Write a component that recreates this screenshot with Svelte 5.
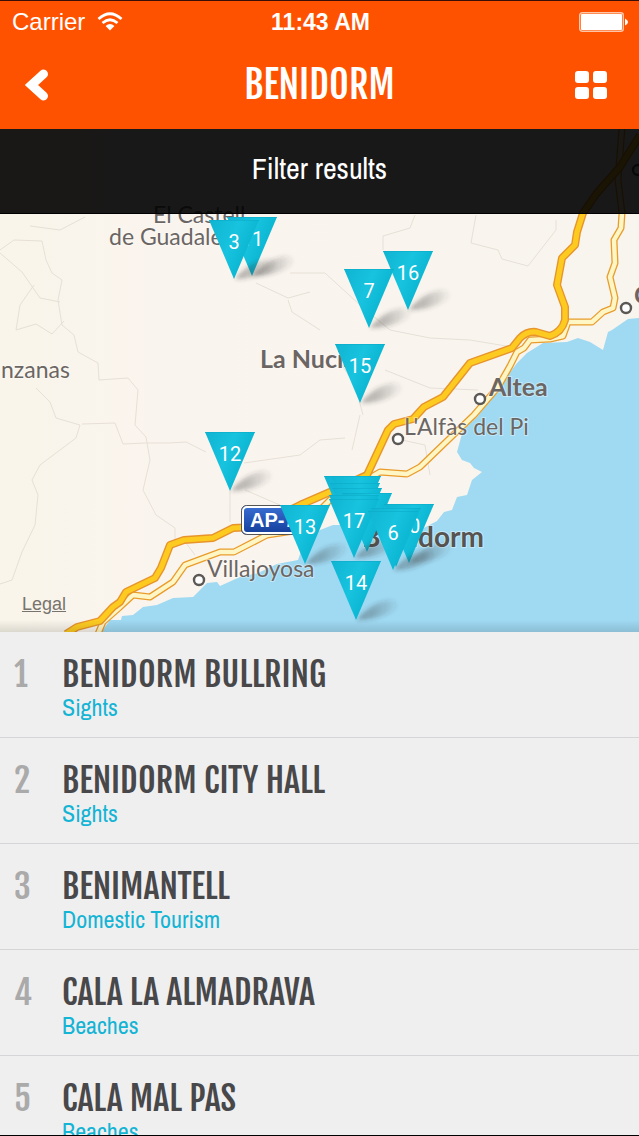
<script>
  const places = [
    { name: 'BENIDORM BULLRING', kind: 'Sights' },
    { name: 'BENIDORM CITY HALL', kind: 'Sights' },
    { name: 'BENIMANTELL', kind: 'Domestic Tourism' },
    { name: 'CALA LA ALMADRAVA', kind: 'Beaches' },
    { name: 'CALA MAL PAS', kind: 'Beaches' }
  ];

  // Pins in drawing order: x, y is the top left corner of the triangle.
  const pins = [
    { x: 227, y: 217, n: 11 },
    { x: 209, y: 220, n: 3 },
    { x: 383, y: 251, n: 16 },
    { x: 344, y: 269, n: 7 },
    { x: 335, y: 344, n: 15 },
    { x: 205, y: 432, n: 12 },
    { x: 324, y: 476 },
    { x: 331, y: 476 },
    { x: 330, y: 483 },
    { x: 332, y: 488 },
    { x: 342, y: 493 },
    { x: 329, y: 495 },
    { x: 280, y: 505, n: 13 },
    { x: 329, y: 499, n: 17 },
    { x: 384, y: 504, n: 10 },
    { x: 371, y: 508 },
    { x: 368, y: 511, n: 6 },
    { x: 331, y: 561, n: 14 }
  ];

  const towns = [
    { x: 199, y: 580 },
    { x: 398, y: 439 },
    { x: 480, y: 399 },
    { x: 626, y: 308 },
    { x: 638, y: 170 }
  ];

  const motorway =
    'M66 634 L77 627 L100 621 L113 607 L120 602 L126 592 L155 578 L161 568 L170 545 L184 540 L213 538 L233 528 L255 527 L300 505 L330 492 L367 475 L388 430 L394 424 L413 419 L424 407 L443 397 L470 363 L512 348 L520 338 Q527 331 536 332 L550 336 Q562 332 565 320 L565 307 L557 285 L562 258 L575 245 L577 232 L583 213 L597 193 L620 167 L640 135';
  const coastRoad =
    'M98 634 L103 622 L120 607 L133 595 L150 597 L173 582 L185 565 L220 552 L234 552 L267 535 L300 530 L330 500 L373 476 L380 472 L407 474 L420 467 L474 415 L498 387 L510 366 L517 352 L524 348 L530 340 L550 339 L563 336 L568 322 L592 322 L603 312 L613 308 L615 298 L610 277 L615 263 L614 240 L621 228 L622 213 L618 180 L622 128';
  const sea =
    'M640 318 L628 319 L612 330 L608 332 L603 350 L590 342 L578 338 L567 342 L543 343 L527 353 L517 363 L503 382 L493 397 L477 417 L463 430 L457 452 L462 460 L470 463 L474 468 L482 472 L472 480 L467 495 L457 497 L452 510 L444 512 L437 521 L418 531 L385 536 L350 525 L333 525 L320 530 L305 540 L298 560 L277 564 L258 573 L240 577 L220 586 L217 582 L207 583 L193 597 L173 598 L157 605 L143 607 L133 615 L122 616 L121 620 L110 620 L100 634 H640 Z';
</script>

<div class="page">
  <header>
    <div class="status">
      <span class="carrier">
        Carrier
        <svg width="26" height="20" viewBox="0 0 26 20" fill="none" aria-hidden="true">
          <path d="M1.5 7 Q13 -3.5 24.5 7" stroke="#fff" stroke-width="2.8" />
          <path d="M5.5 11 Q13 4.5 20.5 11" stroke="#fff" stroke-width="2.8" />
          <path d="M8.6 14 Q13 10 17.4 14 L13 18.6 Z" fill="#fff" />
        </svg>
      </span>
      <span class="time">11:43 AM</span>
      <svg class="battery" width="50" height="20" viewBox="0 0 50 20" aria-hidden="true">
        <rect x="0.7" y="0.7" width="43.6" height="18.6" rx="2.5" fill="none" stroke="#ffc5a8" stroke-width="1.4" />
        <rect x="2" y="2" width="41" height="16" rx="1" fill="#fff" />
        <path d="M46 6.5 Q49 8 49 10 Q49 12 46 13.5 Z" fill="#fff" />
      </svg>
    </div>
    <nav>
      <button aria-label="Back">
        <svg width="26" height="34" viewBox="0 0 26 34" aria-hidden="true">
          <path d="M19.5 6 L7.5 17 L19.5 28" fill="none" stroke="#fff" stroke-width="9" stroke-linecap="round" />
          <path d="M1.5 17 L10 9 V25 Z" fill="#fff" />
        </svg>
      </button>
      <h1>BENIDORM</h1>
      <button class="grid" aria-label="Grid view">
        <svg width="32" height="28" viewBox="0 0 32 28" fill="#fff" aria-hidden="true">
          <rect x="0" y="0" width="14" height="12" rx="3" />
          <rect x="18" y="0" width="14" height="12" rx="3" />
          <rect x="0" y="16" width="14" height="12" rx="3" />
          <rect x="18" y="16" width="14" height="12" rx="3" />
        </svg>
      </button>
    </nav>
  </header>

  <section class="map">
    <svg class="canvas" viewBox="0 129 639 503" role="img" aria-label="Map of Benidorm">
      <defs>
        <linearGradient id="land" x1="0" x2="1" y1="0" y2="0">
          <stop offset="0" stop-color="#f9f5ea" />
          <stop offset="0.25" stop-color="#faf4ee" />
          <stop offset="1" stop-color="#f8f5ee" />
        </linearGradient>
        <linearGradient id="pin" x1="0" x2="1" y1="0" y2="0.5">
          <stop offset="0" stop-color="#10b4d2" />
          <stop offset="0.5" stop-color="#17c3de" />
          <stop offset="1" stop-color="#05b0cd" />
        </linearGradient>
        <linearGradient id="shield" x1="0" x2="0" y1="0" y2="1">
          <stop offset="0" stop-color="#3d70d4" />
          <stop offset="0.5" stop-color="#2556b8" />
          <stop offset="1" stop-color="#143d98" />
        </linearGradient>
        <linearGradient id="edge" x1="0" x2="0" y1="0" y2="1">
          <stop offset="0" stop-color="#000" stop-opacity="0" />
          <stop offset="1" stop-color="#000" stop-opacity="0.12" />
        </linearGradient>
        <linearGradient id="fade" x1="0" x2="1" y1="0" y2="0">
          <stop offset="0" stop-color="#333" stop-opacity="0.4" />
          <stop offset="0.5" stop-color="#333" stop-opacity="0.25" />
          <stop offset="1" stop-color="#333" stop-opacity="0.03" />
        </linearGradient>
        <filter id="soft" x="-30%" y="-60%" width="160%" height="220%">
          <feGaussianBlur stdDeviation="2" />
        </filter>
      </defs>

      <rect y="129" width="639" height="503" fill="url(#land)" />
      <g class="tracks">
        <path d="M0 250 L14 240 L42 241 L46 260 L52 273 L62 280 L58 300 L62 325 L74 335 L78 352 L98 363 L99 380 L128 378 L138 390 L135 425 L146 437 L150 460 L143 490 L156 515 L175 528 V540" />
        <path d="M0 253 L22 272 L40 298 L60 302 M16 330 L20 305 L34 285 M16 330 L36 324 L52 334 L64 321" />
        <path d="M36 388 L50 402 L56 418 L80 425 L76 438 L40 465 L32 480 L38 495 L35 525 L22 552 L12 580 L0 584" />
        <path d="M82 424 L115 423 L123 444 L145 443 L168 443 L186 442 L206 452 M230 491 V522 M244 463 L300 455 L320 440 L345 438" />
        <path d="M30 226 L60 230 L85 217 M256 283 L288 298 L310 292 M288 300 L292 312 L320 330 M290 273 H325 L360 305 L390 330 L430 338 L470 340 L512 347" />
        <path d="M415 215 L410 228 L383 236 V250 M476 215 L471 243 L498 250 L502 259 L528 266 L556 230 V220 M340 362 L355 385 L363 415 M360 415 L352 450" />
        <path d="M385 370 L430 388 L478 390 M402 440 L425 445 L430 475 M245 490 L280 505 M186 543 L195 555" />
      </g>
      <path d={sea} fill="#9fd9f2" />

      <path d={coastRoad} class="road" stroke="#e99c2b" stroke-width="7" />
      <path d={coastRoad} class="road" stroke="#fff6c6" stroke-width="4.4" />
      <path d={motorway} class="road" stroke="#e8942c" stroke-width="8" />
      <path d={motorway} class="road" stroke="#fdcb20" stroke-width="5.2" />

      {#each towns as t}
        <circle cx={t.x} cy={t.y} r="5" fill="#fff" stroke="#5c5856" stroke-width="2.4" />
      {/each}

      <g class="labels">
        <text x="153" y="223">El Castell</text>
        <text x="109" y="245">de Guadalest</text>
        <text x="1" y="378">nzanas</text>
        <text x="404" y="435">L'Alfàs del Pi</text>
        <text x="207" y="577">Villajoyosa</text>
        <text x="260" y="368" class="town">La Nucia</text>
        <text x="489" y="396" class="town">Altea</text>
        <text x="634" y="304" class="town">C</text>
        <text x="362" y="547" class="city">Benidorm</text>
      </g>

      <rect x="241.5" y="505.5" width="68" height="29" rx="5" fill="url(#shield)" stroke="#555" stroke-width="1" />
      <rect x="243" y="507" width="65" height="26" rx="4" fill="none" stroke="#fff" stroke-width="2" />
      <text x="250" y="527" class="shield">AP-7</text>

      {#each pins as p}
        <g transform="translate({p.x} {p.y})">
          {#if p.n}
            <path d="M26 59 Q40 41 60 39 Q72 42 62 50 Q46 59 26 59 Z" fill="url(#fade)" filter="url(#soft)" />
          {/if}
          <path d="M0 0 H50 L25 59 Z" fill="url(#pin)" />
          <path d="M0 0.5 H50" stroke="#0aa7c4" stroke-opacity="0.5" />
          {#if p.n}<text x="25" y="29" class="num">{p.n}</text>{/if}
        </g>
      {/each}
      <rect y="620" width="639" height="12" fill="url(#edge)" />
    </svg>
    <button class="filter">Filter results</button>
    <a class="legal" href="#legal">Legal</a>
  </section>

  <ol>
    {#each places as place, i}
      <li>
        <a href="#place-{i + 1}">
          <span class="index">{i + 1}</span>
          <span class="text">
            <span class="name">{place.name}</span>
            <span class="kind">{place.kind}</span>
          </span>
        </a>
      </li>
    {/each}
  </ol>
</div>

<style>
  :global(body) {
    margin: 0;
  }
  .page {
    box-sizing: border-box;
    height: 100vh;
    display: flex;
    flex-direction: column;
    border-top: 1px solid #3a0d05;
    border-bottom: 1px solid #000;
    background: #f0eff0;
    font-family: 'Archivo Narrow', 'Roboto Condensed', 'PT Sans Narrow', Roboto, sans-serif;
    overflow: hidden;
  }
  button {
    border: 0;
    padding: 0;
    background: none;
    color: inherit;
    font: inherit;
    cursor: pointer;
  }
  button svg {
    display: block;
  }
  header {
    flex: none;
    background: #ff5200;
    color: #fff;
  }
  .status {
    display: grid;
    grid-template-columns: 1fr auto 1fr;
    align-items: center;
    height: 40px;
    padding: 0 10px 0 12px;
    font: 24px/42px 'Liberation Sans', Arial, sans-serif;
  }
  .carrier {
    display: flex;
    align-items: center;
    gap: 12px;
  }
  .time {
    font-size: 23px;
    font-weight: 700;
  }
  .battery {
    justify-self: end;
  }
  nav {
    display: grid;
    grid-template-columns: 1fr auto 1fr;
    align-items: center;
    height: 88px;
    padding: 0 24px;
  }
  nav button {
    justify-self: start;
  }
  nav .grid {
    justify-self: end;
    padding-right: 8px;
  }
  h1,
  .index,
  .name {
    font-family: 'Fjalla One', 'Roboto Condensed', Roboto, sans-serif;
    font-weight: 400;
  }
  h1 {
    margin: 0;
    font-size: 38px;
    line-height: 40px;
  }
  .map {
    position: relative;
    flex: none;
  }
  .canvas {
    display: block;
    width: 100%;
    height: auto;
  }
  .tracks path {
    fill: none;
    stroke: #e6e0d7;
    stroke-width: 1;
  }
  .road {
    fill: none;
    stroke-linejoin: round;
  }
  .labels {
    font-family: Lato, sans-serif;
    font-size: 23px;
    fill: #6b6663;
    stroke: #fff;
    stroke-opacity: 0.4;
    stroke-width: 2px;
    paint-order: stroke;
  }
  .town {
    font-size: 25px;
    font-weight: 700;
  }
  .city {
    font-size: 28px;
    font-weight: 700;
    fill: #575350;
  }
  .shield {
    font: 700 20px 'Liberation Sans', Arial, sans-serif;
    fill: #fff;
  }
  .num {
    font: 20px Roboto, sans-serif;
    fill: #fff;
    text-anchor: middle;
  }
  .filter {
    position: absolute;
    top: 0;
    left: 0;
    width: 100%;
    height: 85px;
    padding-bottom: 6px;
    background: rgba(0, 0, 0, 0.9);
    border-bottom: 1px solid #000;
    color: #fff;
    font-size: 30px;
  }
  .legal {
    position: absolute;
    left: 22px;
    bottom: 18px;
    color: #77736f;
    font: 18px/20px 'Liberation Sans', Arial, sans-serif;
  }
  ol {
    flex: 1;
    min-height: 0;
    margin: 0;
    padding: 0;
    list-style: none;
    overflow-y: auto;
    scrollbar-width: none;
  }
  li {
    border-bottom: 1px solid #d5d4d7;
  }
  li a {
    display: flex;
    padding: 23px 14px 16px;
    color: inherit;
    text-decoration: none;
  }
  .index {
    flex: none;
    width: 48px;
    color: #aaa;
    font-size: 34px;
    line-height: 38px;
  }
  .text {
    display: flex;
    flex-direction: column;
  }
  .name {
    color: #48484a;
    font-size: 34px;
    line-height: 38px;
  }
  .kind {
    color: #14b4d4;
    font-size: 24px;
    line-height: 28px;
  }
</style>
